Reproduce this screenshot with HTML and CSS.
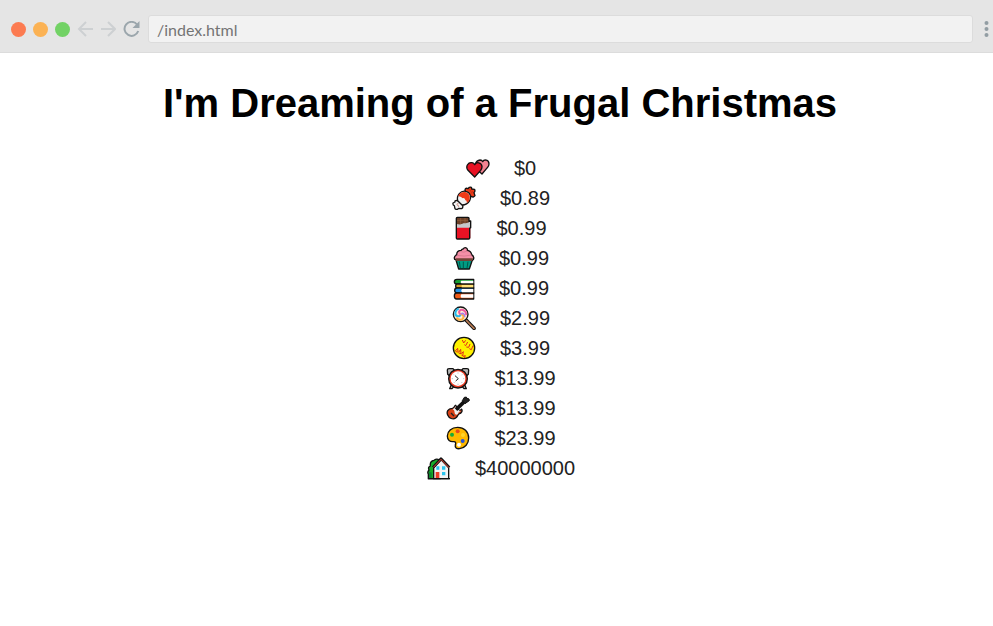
FILE: index.html
```html
<!DOCTYPE html>
<html lang="en">
<head>
<meta charset="utf-8">
<meta name="viewport" content="width=device-width, initial-scale=1">
<title>I'm Dreaming of a Frugal Christmas</title>
<link rel="stylesheet" href="styles.css">
</head>
<body>
<header class="toolbar">
  <span class="dot dot-red"></span>
  <span class="dot dot-amber"></span>
  <span class="dot dot-green"></span>
  <button class="nav" type="button" aria-label="Back"><svg viewBox="0 0 16 16"><path d="M16 8H2M9 1L2 8l7 7"/></svg></button>
  <button class="nav" type="button" aria-label="Forward"><svg viewBox="0 0 16 16"><path d="M1 8h14M8 1l7 7-7 7"/></svg></button>
  <button class="nav reload" type="button" aria-label="Reload"><svg viewBox="0 0 16 16"><path d="M13.500 3.500A7 7 0 1 0 14.700 10"/><path class="tip" d="M16 0v7H9z"/></svg></button>
  <input class="address" type="text" aria-label="Address" value="/index.html">
  <button class="menu" type="button" aria-label="Menu"><svg viewBox="0 0 5 16"><circle cx="2.500" cy="2" r="2"/><circle cx="2.500" cy="8" r="2"/><circle cx="2.500" cy="14" r="2"/></svg></button>
</header>
<main class="page">
  <h1>I'm Dreaming of a Frugal Christmas</h1>
  <ul class="gifts">
    <li>
      <svg class="icon" viewBox="0 0 72 72"><g stroke="#111" stroke-width="4" stroke-linejoin="round"><path fill="#f18391" d="M48 54L32 40C24 28 28 14 42 12q6 0 8 5c4-8 19-7 19 7 0 5-2 8-5 11z"/><path fill="#e81224" d="M26 63L6 43C-3 31 7 18 18 20q6 1 8 6c5-9 21-8 22 6 0 5-2 8-4 11z"/></g></svg>
      <span>$0</span>
    </li>
    <li>
      <svg class="icon" viewBox="0 0 72 72"><g stroke="#111" stroke-width="4" stroke-linejoin="round"><path fill="#f03a17" d="M42 24l-3-12q1-8 9-4l4-4q8-2 7 5l8 1q4 4-1 10l3 9q-5 7-11 2l-8 3z"/><path fill="#f2f2f2" d="M30 48l-16-5q-6 0-5 5l-6 3q-1 7 4 8l2 9q6 5 11-1l9 1q5-3 3-9l3-8z"/><path d="M17 44C13 28 26 13 41 16c14 2 18 17 12 28-5 9-13 13-23 13z" fill="#f2f2f2"/></g><path fill="#f03a17" d="M19 29C24 18 40 14 49 23c7 8 6 20-4 28-2-5 0-8-5-8-1-6-5-8-9-6-3-6-8-4-12-8z"/><path d="M53 11l4 6m6-1l-7 7M14 55l5-2m1 9l-3-5" fill="none" stroke="#9e2717" stroke-width="2"/></svg>
      <span>$0.89</span>
    </li>
    <li>
      <svg class="icon icon-slim" viewBox="0 0 51 72"><path fill="#e81224" d="M5 25h41v41q0 3-4 3H9q-4 0-4-3z"/><path fill="#6b4028" d="M5 4h37v18L5 31z"/><path d="M5 13h37M17 4v20M30 4v20" stroke="#96643f" stroke-width="2"/><path fill="#c5c8ca" d="M4 24c9 1 13 3 21-2 7-1 13 1 22-8v21H4z"/><path d="M7 4h32q3 0 3 3v9l5-1v20l-3 2v29q0 3-3 3H7q-3 0-3-3V7q0-3 3-3z" fill="none" stroke="#111" stroke-width="4" stroke-linejoin="round"/></svg>
      <span>$0.99</span>
    </li>
    <li>
      <svg class="icon icon-mid" viewBox="0 0 66 72"><g stroke="#111" stroke-width="4" stroke-linejoin="round"><path fill="#009b83" d="M9 42h49l-9 27H17z"/><path fill="#f58fa7" d="M5 40c-4-8 3-12 6-14 0-9 7-13 14-13 2-5 6-2 8-7 6-3 12 2 10 7 8 1 12 6 13 13 7 5 9 13 2 17z"/></g><path fill="#704536" d="M7 37h53l-3 8H10z"/><path d="M19 47l3 19m9-19v20m14-20l-3 19" stroke="#00594c" stroke-width="3"/><path d="M12 28q21 5 44-1M23 17q9 4 20-2" fill="none" stroke="#ce6f87" stroke-width="2"/></svg>
      <span>$0.99</span>
    </li>
    <li>
      <svg class="icon icon-mid" viewBox="0 0 66 72"><g stroke="#111" stroke-width="4" stroke-linejoin="round"><path fill="#179e32" d="M62 10H12q-8 0-8 7t8 7h50z"/><path fill="#d69b22" d="M62 24H13q-5 0-5 6t5 6h49z"/><path fill="#2492e6" d="M62 36H12q-7 0-7 7 0 8 7 8h50z"/><path fill="#ef5b18" d="M62 51H11q-7 0-7 9t7 9h51z"/></g><path fill="#fff" d="M25 14h36v8H25q-5-4 0-8zM27 39h34v10H27q-5-5 0-10zM25 55h36v10H25q-5-5 0-10z"/><path fill="#ffe279" d="M26 27h35v7H26z"/></svg>
      <span>$0.99</span>
    </li>
    <li>
      <svg class="icon" viewBox="0 0 72 72"><path d="M42 42l24 25" stroke="#111" stroke-width="11" stroke-linecap="round"/><path d="M42 42l24 25" stroke="#b87a52" stroke-width="5" stroke-linecap="round"/><circle cx="26" cy="25" r="22" fill="#fff0dc" stroke="#111" stroke-width="4"/><g fill="none" stroke-width="6"><path stroke="#28b9e8" d="M26 25c-2 10-17 6-16-4 1-7 5-11 10-13"/><path stroke="#f05b9f" d="M26 25c-9-5-3-17 7-13 7 3 10 9 9 15"/><path stroke="#ffb13e" d="M26 25c9 0 12 10 4 15-6 3-13 0-17-5"/><path stroke="#a780ee" stroke-width="5" d="M27 25c5-6 13 0 11 8"/></g></svg>
      <span>$2.99</span>
    </li>
    <li>
      <svg class="icon" viewBox="0 0 72 72"><circle cx="36" cy="36" r="32" fill="#fff100" stroke="#111" stroke-width="4"/><g fill="none" stroke="#e22b19" stroke-width="3"><path d="M31 12l4 9 6-8m-4 13l4 3 6-11m-4 15l7 1 4-10m-2 14l6 3 5-12M10 45l7-8 1 12m2 0l6-9 1 12m1 1l6-6-2 13m1 1l7-2-3 7M10 45l6 4m4 2l7 2m1 3l5 5"/></g></svg>
      <span>$3.99</span>
    </li>
    <li>
      <svg class="icon" viewBox="0 0 72 72"><g stroke="#111" stroke-width="4" stroke-linejoin="round"><path fill="#b8b8b8" d="M5 25L4 12q0-4 5-4h12l6 7L12 31zM67 25l1-13q0-4-5-4H51l-6 7 15 16zM16 56l-5 12h7l6-7zM56 56l5 12h-7l-6-7z"/><circle cx="36" cy="38" r="28" fill="#e83a22"/></g><circle cx="36" cy="38" r="22" fill="#fff"/><path d="M36 19v4m0 30v4M17 38h4m30 0h4M23 25l3 3m20 20l3 3M49 25l-3 3M26 48l-3 3" stroke="#aaa" stroke-width="2"/><path d="M27 29l10 9-8 7" fill="none" stroke="#222" stroke-width="3"/></svg>
      <span>$13.99</span>
    </li>
    <li>
      <svg class="icon" viewBox="0 0 72 72"><path fill="#d94116" stroke="#111" stroke-width="4" d="M29 28c-5 2-3 8-10 9C5 38 1 48 5 57c4 10 16 15 24 9 7-5 5-9 10-12 8-3 11-9 8-14-4 3-7 4-9 2z"/><path fill="#eee" d="M29 31q-4 8-9 9c8 3 4 9 8 15q7 3 9-4 1-5 7-5-6-1-8-6z"/><path d="M30 41l28-27" stroke="#111" stroke-width="11"/><path fill="#222" stroke="#111" stroke-width="3" d="M49 14l6-10q8-3 8 3 8 0 7 7l-13 9z"/><path d="M15 51l9 9" stroke="#222" stroke-width="4"/></svg>
      <span>$13.99</span>
    </li>
    <li>
      <svg class="icon" viewBox="0 0 72 72"><path fill="#ffb900" stroke="#111" stroke-width="4" stroke-linejoin="round" d="M35 4C16 4 4 16 4 30c0 12 8 18 18 17 8-1 8 4 6 9-2 9 4 13 13 12 16-2 27-15 27-32C68 17 54 4 35 4z"/><circle cx="35" cy="16" r="6" fill="#e84922"/><circle cx="18" cy="26" r="6" fill="#18ac38"/><circle cx="51" cy="27" r="6" fill="#ffd52b"/><circle cx="50" cy="45" r="6" fill="#2754d8"/><circle cx="39" cy="56" r="6" fill="#fff"/></svg>
      <span>$23.99</span>
    </li>
    <li>
      <svg class="icon" viewBox="0 0 72 72"><path fill="#16ac29" stroke="#111" stroke-width="4" d="M4 68V54q-4-5 2-12-4-9 4-12-2-15 11-17 8-6 14-2l4 5v52z"/><path fill="#0b852d" d="M6 46l8 4v16H6z"/><path fill="#f4f4f4" stroke="#111" stroke-width="4" d="M20 35L43 11l22 24v33H20z"/><path fill="none" stroke="#111" stroke-width="8" stroke-linejoin="round" d="M18 34L42 8l25 26"/><path fill="none" stroke="#ef4b3a" stroke-width="3" d="M19 34L42 10l24 25"/><path fill="#2bc4ee" d="M28 31h9v10h-9zm17 0h10v10H45zm0 17h10v10H45z"/><path fill="#ee3f28" d="M26 48h11v18H26z"/><path d="M3 68h66" stroke="#111" stroke-width="4"/></svg>
      <span>$40000000</span>
    </li>
  </ul>
</main>
</body>
</html>
```
FILE: styles.css
```css
* { box-sizing: border-box; }

body {
  margin: 0;
  background: #fff;
  color: #000;
  font-family: "Liberation Sans", Arial, sans-serif;
}

.toolbar {
  display: flex;
  align-items: center;
  gap: 7px;
  padding: 15px 4px 9px 11px;
  background: #e5e5e5;
  border-bottom: 1px solid #dcdcdc;
}

.dot {
  flex: none;
  width: 15px;
  height: 15px;
  border-radius: 50%;
}
.dot-red { background: #fc7b51; }
.dot-amber { background: #fbb254; }
.dot-green { background: #72d265; }

.nav, .menu {
  flex: none;
  padding: 0;
  border: 0;
  background: none;
}
.nav svg, .menu svg { display: block; height: 16px; }
.nav svg {
  width: 16px;
  fill: none;
  stroke: #cdd0d2;
  stroke-width: 2;
}
.reload svg { width: 17px; stroke: #9ba6ac; }
.reload .tip { fill: #9ba6ac; stroke: none; }
.menu svg { width: 5px; fill: #929da3; }

.address {
  flex: 1;
  min-width: 0;
  height: 28px;
  margin: 0 4px 0 1px;
  padding: 0 8px;
  border: 1px solid #dcdcdc;
  border-radius: 3px;
  background: #f2f2f2;
  color: #747474;
  font: 16px Lato, sans-serif;
}

.page {
  padding: 27px 0 27px 7px;
  text-align: center;
}

h1 {
  margin: 0;
  font-size: 40px;
  line-height: 46px;
}

.gifts {
  margin: 27px 0 0;
  padding: 0 0 0 2px;
  list-style: none;
  color: #222;
  font-size: 20px;
  line-height: 30px;
}
.gifts li {
  display: flex;
  justify-content: center;
  align-items: center;
  gap: 24px;
}

.icon { flex: none; width: 24px; height: 24px; }
.icon-slim { width: 17px; }
.icon-mid { width: 22px; }
```
